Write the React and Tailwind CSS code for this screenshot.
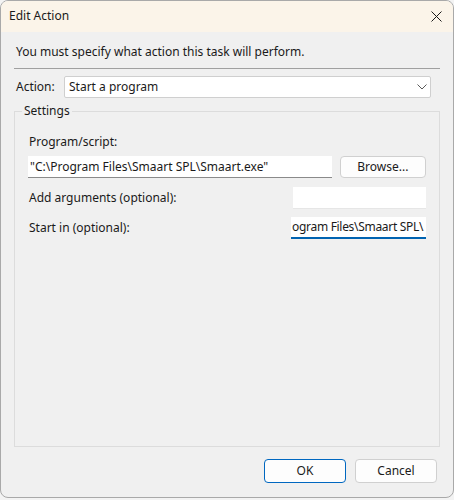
import React from "react";

const font = { fontFamily: '"Segoe UI", "Noto Sans", "Liberation Sans", sans-serif' };

function Chevron() {
  return (
    <svg width="10" height="6" viewBox="0 0 10 6" fill="none">
      <path d="M0.5 0.5 L5 5 L9.5 0.5" stroke="#5a5a5a" strokeWidth="1" />
    </svg>
  );
}

function CloseIcon() {
  return (
    <svg width="11" height="11" viewBox="0 0 11 11" fill="none">
      <path d="M0.5 0.5 L10.5 10.5 M10.5 0.5 L0.5 10.5" stroke="#1a1a1a" strokeWidth="1" />
    </svg>
  );
}

export default function App() {
  return (
    <div className="w-[454px] h-[500px] bg-[#f3f3f3] text-[12px] text-[#1a1a1a]" style={font}>
      <div className="w-[454px] h-[498px] border border-[#a9a9a9] rounded-[8px] overflow-hidden bg-[#f0f0f0] flex flex-col">
        {/* title bar */}
        <div className="h-[31px] bg-[#fbf4e9] flex items-center justify-between pl-[8px] pr-[11px] shrink-0">
          <span className="text-[12px] leading-none -mt-[1px]">Edit Action</span>
          <CloseIcon />
        </div>

        <div className="flex-1 flex flex-col px-[12px]">
          <div className="pl-[3px] pt-[12px] h-[36px] leading-[16px]">
            You must specify what action this task will perform.
          </div>
          <div className="h-px bg-[#a0a0a0] mx-[1px]" />

          <div className="flex items-center mt-[7px] pl-[3px]">
            <span className="w-[48px]">Action:</span>
            <div className="w-[367px] h-[22px] bg-white border border-[#cfcfcf] rounded-[2px] flex items-center justify-between pl-[4px] pr-[3px]">
              <span>Start a program</span>
              <Chevron />
            </div>
          </div>

          {/* Settings group */}
          <div className="relative mt-[13px] h-[336px] border border-[#dcdcdc] mx-[1px]">
            <span className="absolute -top-[9px] left-[7px] px-[2px] bg-[#f0f0f0] leading-[16px]">Settings</span>

            <div className="pl-[14px] pr-[13px] pt-[22px]">
              <div className="leading-[16px]">Program/script:</div>
              <div className="flex items-center mt-[6px] -ml-[1px]">
                <div className="w-[306px] h-[22px] bg-white border-b border-[#8a8a8a] flex items-center pl-[2px]">
                  "C:\Program Files\Smaart SPL\Smaart.exe"
                </div>
                <div className="ml-[8px] w-[87px] h-[22px] bg-[#fdfdfd] border border-[#d0d0d0] rounded-[4px] flex items-center justify-center">
                  Browse...
                </div>
              </div>

              <div className="flex items-center justify-between mt-[9px]">
                <span>Add arguments (optional):</span>
                <div className="w-[133px] h-[22px] bg-white border-b border-[#e6e6e6]" />
              </div>

              <div className="flex items-center justify-between mt-[8px]">
                <span>Start in (optional):</span>
                <div className="w-[135px] h-[22px] bg-white border-b-2 border-[#0063b1] flex items-center pl-[1px] whitespace-nowrap tracking-[-0.3px]">
                  ogram Files\Smaart SPL\
                </div>
              </div>
            </div>
          </div>

          <div className="flex justify-end gap-[9px] mt-[12px] pr-[4px]">
            <div className="w-[82px] h-[24px] bg-[#fdfdfd] border border-[#0067c0] rounded-[4px] flex items-center justify-center">
              OK
            </div>
            <div className="w-[82px] h-[24px] bg-[#fdfdfd] border border-[#d0d0d0] rounded-[4px] flex items-center justify-center">
              Cancel
            </div>
          </div>
        </div>
      </div>
    </div>
  );
}
